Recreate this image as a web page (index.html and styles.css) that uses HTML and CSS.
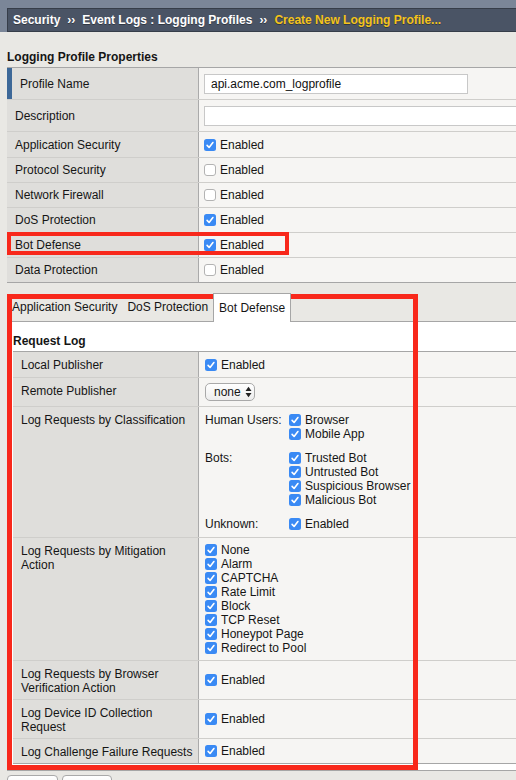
FILE: index.html
```html
<!DOCTYPE html>
<html>
<head>
<meta charset="utf-8">
<title>Create New Logging Profile</title>
<link rel="stylesheet" href="styles.css">
</head>
<body>
<div class="top">
  <div class="crumbs"><span>Security</span><span class="sep">››</span><span>Event Logs : Logging Profiles</span><span class="sep">››</span><span class="cur">Create New Logging Profile...</span></div>
</div>
<div class="main">
  <div class="title">Logging Profile Properties</div>
  <div class="props">
    <div class="row h31"><div class="lbl key">Profile Name</div><div class="val"><div class="txt txt-name">api.acme.com_logprofile</div></div></div>
    <div class="row h31"><div class="lbl">Description</div><div class="val"><div class="txt txt-desc"></div></div></div>
    <div class="row h25"><div class="lbl">Application Security</div><div class="val"><span class="chk"><svg class="cb" viewBox="0 0 12 12"><rect width="12" height="12" rx="2.5" fill="#3a8af4"/><path d="M3.1 6.4l2 2.1 3.8-5" fill="none" stroke="#fff" stroke-width="1.6" stroke-linecap="round" stroke-linejoin="round"/></svg>Enabled</span></div></div>
    <div class="row h24"><div class="lbl">Protocol Security</div><div class="val"><span class="chk"><svg class="cb" viewBox="0 0 12 12"><rect x=".5" y=".5" width="11" height="11" rx="2.5" fill="#fff" stroke="#b3b3b3"/></svg>Enabled</span></div></div>
    <div class="row h24"><div class="lbl">Network Firewall</div><div class="val"><span class="chk"><svg class="cb" viewBox="0 0 12 12"><rect x=".5" y=".5" width="11" height="11" rx="2.5" fill="#fff" stroke="#b3b3b3"/></svg>Enabled</span></div></div>
    <div class="row h24"><div class="lbl">DoS Protection</div><div class="val"><span class="chk"><svg class="cb" viewBox="0 0 12 12"><rect width="12" height="12" rx="2.5" fill="#3a8af4"/><path d="M3.1 6.4l2 2.1 3.8-5" fill="none" stroke="#fff" stroke-width="1.6" stroke-linecap="round" stroke-linejoin="round"/></svg>Enabled</span></div></div>
    <div class="row h24"><div class="lbl">Bot Defense</div><div class="val"><span class="chk"><svg class="cb" viewBox="0 0 12 12"><rect width="12" height="12" rx="2.5" fill="#3a8af4"/><path d="M3.1 6.4l2 2.1 3.8-5" fill="none" stroke="#fff" stroke-width="1.6" stroke-linecap="round" stroke-linejoin="round"/></svg>Enabled</span></div></div>
    <div class="row h24"><div class="lbl">Data Protection</div><div class="val"><span class="chk"><svg class="cb" viewBox="0 0 12 12"><rect x=".5" y=".5" width="11" height="11" rx="2.5" fill="#fff" stroke="#b3b3b3"/></svg>Enabled</span></div></div>
  </div>

  <div class="tabs">
    <div class="tab">Application Security</div>
    <div class="tab">DoS Protection</div>
    <div class="tab on">Bot Defense</div>
  </div>
  <div class="panel">
    <div class="ptitle">Request Log</div>
    <div class="req">
      <div class="row q25"><div class="lbl">Local Publisher</div><div class="val"><span class="chk"><svg class="cb" viewBox="0 0 12 12"><rect width="12" height="12" rx="2.5" fill="#3a8af4"/><path d="M3.1 6.4l2 2.1 3.8-5" fill="none" stroke="#fff" stroke-width="1.6" stroke-linecap="round" stroke-linejoin="round"/></svg>Enabled</span></div></div>
      <div class="row q28"><div class="lbl">Remote Publisher</div><div class="val"><div class="sel"><span>none</span><svg class="arr" viewBox="0 0 7 12"><path d="M0.5 5L3.5 0.8L6.5 5Z M0.5 7L3.5 11.2L6.5 7Z" fill="#222"/></svg></div></div></div>
      <div class="row q130"><div class="lbl">Log Requests by Classification</div><div class="val">
        <div class="cls">
          <div class="grp">Human Users:</div>
          <div class="list">
            <span class="chk"><svg class="cb" viewBox="0 0 12 12"><rect width="12" height="12" rx="2.5" fill="#3a8af4"/><path d="M3.1 6.4l2 2.1 3.8-5" fill="none" stroke="#fff" stroke-width="1.6" stroke-linecap="round" stroke-linejoin="round"/></svg>Browser</span>
            <span class="chk"><svg class="cb" viewBox="0 0 12 12"><rect width="12" height="12" rx="2.5" fill="#3a8af4"/><path d="M3.1 6.4l2 2.1 3.8-5" fill="none" stroke="#fff" stroke-width="1.6" stroke-linecap="round" stroke-linejoin="round"/></svg>Mobile App</span>
          </div>
          <div class="grp">Bots:</div>
          <div class="list">
            <span class="chk"><svg class="cb" viewBox="0 0 12 12"><rect width="12" height="12" rx="2.5" fill="#3a8af4"/><path d="M3.1 6.4l2 2.1 3.8-5" fill="none" stroke="#fff" stroke-width="1.6" stroke-linecap="round" stroke-linejoin="round"/></svg>Trusted Bot</span>
            <span class="chk"><svg class="cb" viewBox="0 0 12 12"><rect width="12" height="12" rx="2.5" fill="#3a8af4"/><path d="M3.1 6.4l2 2.1 3.8-5" fill="none" stroke="#fff" stroke-width="1.6" stroke-linecap="round" stroke-linejoin="round"/></svg>Untrusted Bot</span>
            <span class="chk"><svg class="cb" viewBox="0 0 12 12"><rect width="12" height="12" rx="2.5" fill="#3a8af4"/><path d="M3.1 6.4l2 2.1 3.8-5" fill="none" stroke="#fff" stroke-width="1.6" stroke-linecap="round" stroke-linejoin="round"/></svg>Suspicious Browser</span>
            <span class="chk"><svg class="cb" viewBox="0 0 12 12"><rect width="12" height="12" rx="2.5" fill="#3a8af4"/><path d="M3.1 6.4l2 2.1 3.8-5" fill="none" stroke="#fff" stroke-width="1.6" stroke-linecap="round" stroke-linejoin="round"/></svg>Malicious Bot</span>
          </div>
          <div class="grp">Unknown:</div>
          <div class="list">
            <span class="chk"><svg class="cb" viewBox="0 0 12 12"><rect width="12" height="12" rx="2.5" fill="#3a8af4"/><path d="M3.1 6.4l2 2.1 3.8-5" fill="none" stroke="#fff" stroke-width="1.6" stroke-linecap="round" stroke-linejoin="round"/></svg>Enabled</span>
          </div>
        </div>
      </div></div>
      <div class="row q122"><div class="lbl">Log Requests by Mitigation Action</div><div class="val">
        <div class="list">
          <span class="chk"><svg class="cb" viewBox="0 0 12 12"><rect width="12" height="12" rx="2.5" fill="#3a8af4"/><path d="M3.1 6.4l2 2.1 3.8-5" fill="none" stroke="#fff" stroke-width="1.6" stroke-linecap="round" stroke-linejoin="round"/></svg>None</span>
          <span class="chk"><svg class="cb" viewBox="0 0 12 12"><rect width="12" height="12" rx="2.5" fill="#3a8af4"/><path d="M3.1 6.4l2 2.1 3.8-5" fill="none" stroke="#fff" stroke-width="1.6" stroke-linecap="round" stroke-linejoin="round"/></svg>Alarm</span>
          <span class="chk"><svg class="cb" viewBox="0 0 12 12"><rect width="12" height="12" rx="2.5" fill="#3a8af4"/><path d="M3.1 6.4l2 2.1 3.8-5" fill="none" stroke="#fff" stroke-width="1.6" stroke-linecap="round" stroke-linejoin="round"/></svg>CAPTCHA</span>
          <span class="chk"><svg class="cb" viewBox="0 0 12 12"><rect width="12" height="12" rx="2.5" fill="#3a8af4"/><path d="M3.1 6.4l2 2.1 3.8-5" fill="none" stroke="#fff" stroke-width="1.6" stroke-linecap="round" stroke-linejoin="round"/></svg>Rate Limit</span>
          <span class="chk"><svg class="cb" viewBox="0 0 12 12"><rect width="12" height="12" rx="2.5" fill="#3a8af4"/><path d="M3.1 6.4l2 2.1 3.8-5" fill="none" stroke="#fff" stroke-width="1.6" stroke-linecap="round" stroke-linejoin="round"/></svg>Block</span>
          <span class="chk"><svg class="cb" viewBox="0 0 12 12"><rect width="12" height="12" rx="2.5" fill="#3a8af4"/><path d="M3.1 6.4l2 2.1 3.8-5" fill="none" stroke="#fff" stroke-width="1.6" stroke-linecap="round" stroke-linejoin="round"/></svg>TCP Reset</span>
          <span class="chk"><svg class="cb" viewBox="0 0 12 12"><rect width="12" height="12" rx="2.5" fill="#3a8af4"/><path d="M3.1 6.4l2 2.1 3.8-5" fill="none" stroke="#fff" stroke-width="1.6" stroke-linecap="round" stroke-linejoin="round"/></svg>Honeypot Page</span>
          <span class="chk"><svg class="cb" viewBox="0 0 12 12"><rect width="12" height="12" rx="2.5" fill="#3a8af4"/><path d="M3.1 6.4l2 2.1 3.8-5" fill="none" stroke="#fff" stroke-width="1.6" stroke-linecap="round" stroke-linejoin="round"/></svg>Redirect to Pool</span>
        </div>
      </div></div>
      <div class="row q38"><div class="lbl">Log Requests by Browser Verification Action</div><div class="val"><span class="chk"><svg class="cb" viewBox="0 0 12 12"><rect width="12" height="12" rx="2.5" fill="#3a8af4"/><path d="M3.1 6.4l2 2.1 3.8-5" fill="none" stroke="#fff" stroke-width="1.6" stroke-linecap="round" stroke-linejoin="round"/></svg>Enabled</span></div></div>
      <div class="row q38"><div class="lbl">Log Device ID Collection Request</div><div class="val"><span class="chk"><svg class="cb" viewBox="0 0 12 12"><rect width="12" height="12" rx="2.5" fill="#3a8af4"/><path d="M3.1 6.4l2 2.1 3.8-5" fill="none" stroke="#fff" stroke-width="1.6" stroke-linecap="round" stroke-linejoin="round"/></svg>Enabled</span></div></div>
      <div class="row q24"><div class="lbl">Log Challenge Failure Requests</div><div class="val"><span class="chk"><svg class="cb" viewBox="0 0 12 12"><rect width="12" height="12" rx="2.5" fill="#3a8af4"/><path d="M3.1 6.4l2 2.1 3.8-5" fill="none" stroke="#fff" stroke-width="1.6" stroke-linecap="round" stroke-linejoin="round"/></svg>Enabled</span></div></div>
    </div>
  </div>
  <div class="btns">
    <div class="btn btn-cancel">Cancel</div>
    <div class="btn btn-create">Create</div>
  </div>
</div>
<div class="mark mark-bot"></div>
<div class="mark mark-box"></div>
</body>
</html>
```
FILE: styles.css
```css
html, body {
  margin: 0;
  padding: 0;
  height: 780px;
  overflow: hidden;
}
body {
  position: relative;
  width: 516px;
  background: #e9e8e4;
  font-family: "Liberation Sans", Arial, Helvetica, sans-serif;
  font-size: 12px;
  color: #151515;
}

/* breadcrumb header */
.top {
  background: #7b8698;
  padding: 8px 0 0 7px;
}
.crumbs {
  height: 22px;
  line-height: 22px;
  background: #4a5465;
  border: 1px solid #363d49;
  border-right: 0;
  padding-left: 5px;
  color: #fff;
  font-weight: bold;
  white-space: nowrap;
  overflow: hidden;
  text-shadow: 0 1px 0 rgba(0, 0, 0, 0.35);
}
.sep {
  margin: 0 7px;
}
.cur {
  color: #f4c31a;
}

.main {
  padding-left: 7px;
}
.title {
  font-weight: bold;
  line-height: 14px;
  padding-top: 18px;
  margin-bottom: 3px;
}

/* property tables */
.props {
  border-top: 1px solid #a6a6a6;
}
.row {
  display: flex;
  border-bottom: 1px solid #cfcecb;
}
.props .row:last-child,
.req .row:last-child {
  border-bottom-color: #a6a6a6;
}
.lbl {
  flex: none;
  box-sizing: border-box;
  background: #dfdedb;
  border-right: 1px solid #aaaaaa;
}
.props .lbl {
  width: 192px;
  padding-left: 8px;
  display: flex;
  align-items: center;
}
.props .lbl.key {
  border-left: 5px solid #3d6898;
  padding-left: 8px;
}
.val {
  flex: 1;
  min-width: 0;
  overflow: hidden;
  background: #f6f5f3;
  display: flex;
  align-items: center;
  padding-left: 5px;
}
.h31 { height: 31px; }
.h25 { height: 25px; }
.h24 { height: 24px; }

.txt {
  flex: none;
  box-sizing: border-box;
  height: 20px;
  line-height: 18px;
  border: 1px solid #c8c8c8;
  background: #fff;
  padding-left: 6px;
  color: #111;
}
.txt-name { width: 264px; }
.txt-desc { width: 340px; }

.chk {
  display: flex;
  align-items: center;
  height: 14px;
  line-height: 14px;
  white-space: nowrap;
}
.cb {
  flex: none;
  width: 12px;
  height: 12px;
  margin-right: 4px;
}

/* tabs */
.tabs {
  display: flex;
  align-items: flex-start;
  height: 28px;
  margin-top: 10px;
  border-bottom: 1px solid #a6a6a6;
}
.tab {
  height: 28px;
  line-height: 28px;
  padding: 0 5px;
  white-space: nowrap;
}
.tab.on {
  box-sizing: border-box;
  height: 29px;
  margin-bottom: -1px;
  background: #fff;
  border: 1px solid #a6a6a6;
  border-bottom: 0;
  position: relative;
  z-index: 1;
}

.panel {
  background: #fff;
  border-left: 1px solid #a6a6a6;
  border-bottom: 1px solid #a6a6a6;
  padding: 12px 0 6px 5px;
}
.ptitle {
  font-weight: bold;
  line-height: 14px;
  margin-bottom: 3px;
}
.req {
  border-top: 1px solid #a6a6a6;
}
.req .lbl {
  width: 186px;
  padding: 6px 4px 0 8px;
  line-height: 14px;
}
.req .val {
  padding-left: 6px;
}
.q25 { height: 25px; }
.q28 { height: 28px; }
.q130 { height: 130px; }
.q122 { height: 122px; }
.q38 { height: 38px; }
.q24 { height: 24px; }

.sel {
  box-sizing: border-box;
  width: 50px;
  height: 18px;
  border: 1px solid #a9a9a9;
  border-radius: 5px;
  background: linear-gradient(#ffffff, #ededed);
  display: flex;
  align-items: center;
  padding-left: 8px;
  line-height: 16px;
}
.arr {
  width: 7px;
  height: 12px;
  margin-left: 4px;
}

.cls {
  display: grid;
  grid-template-columns: 84px auto;
  row-gap: 10px;
  line-height: 14px;
}
.list {
  display: flex;
  flex-direction: column;
}

/* buttons */
.btns {
  display: flex;
  gap: 4px;
  margin-top: 4px;
}
.btn {
  box-sizing: border-box;
  height: 20px;
  border: 1px solid #a9a9a9;
  border-radius: 4px;
  background: linear-gradient(#ffffff, #f0f0f0);
  display: flex;
  align-items: center;
  justify-content: center;
}
.btn-cancel { width: 51px; }
.btn-create { width: 50px; }

/* red annotation boxes */
.mark {
  position: absolute;
  box-sizing: border-box;
  border: 4px solid #f8281b;
  pointer-events: none;
}
.mark-bot {
  left: 7px;
  top: 232px;
  width: 282px;
  height: 23px;
}
.mark-box {
  left: 7px;
  top: 294px;
  width: 411px;
  height: 476px;
  border-width: 5px;
}
```
